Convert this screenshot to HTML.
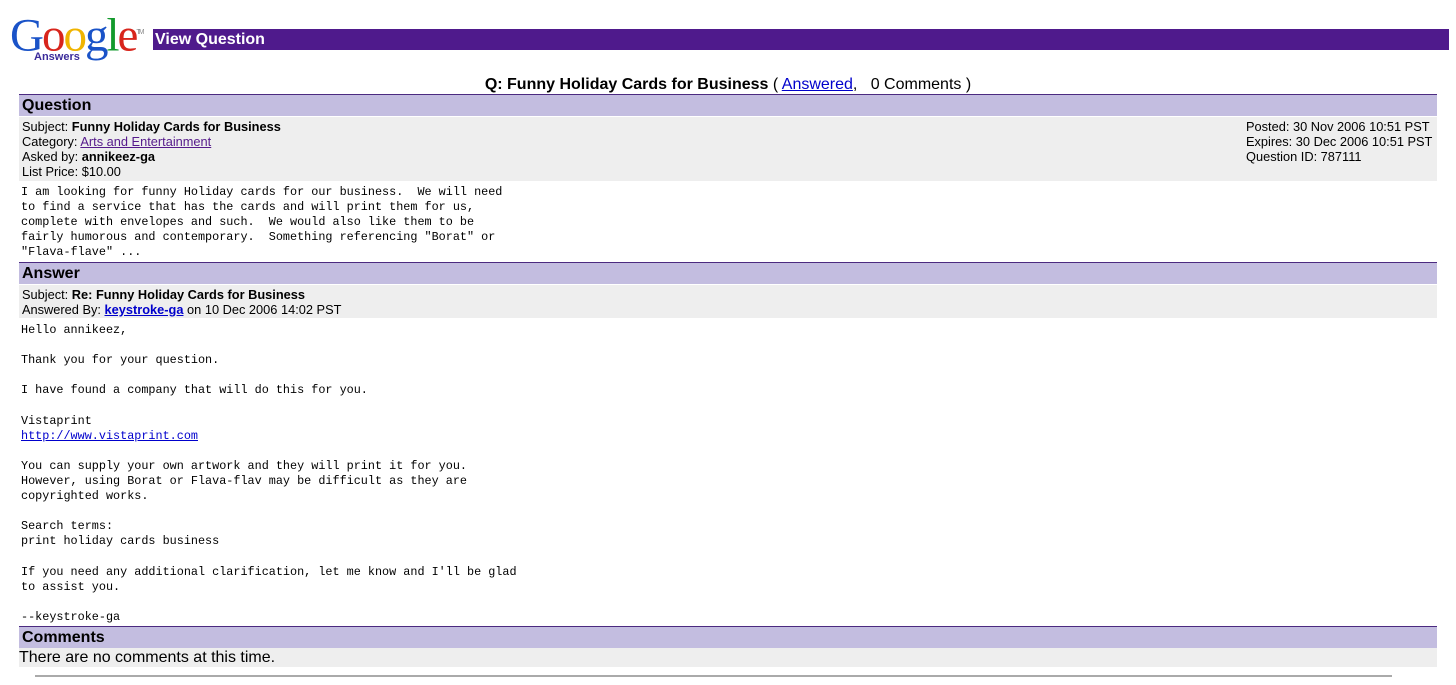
<!DOCTYPE html>
<html><head><meta charset="utf-8"><style>
*{margin:0;padding:0}
body{width:1456px;height:685px;background:#fff;position:relative;font-family:"Liberation Sans",Arial,sans-serif;color:#000;overflow:hidden}
.a{position:absolute}
.logo{left:10px;top:8px;font-family:"Liberation Serif",serif;font-size:47px;letter-spacing:-2px;line-height:50px}
.bar{left:153px;top:29px;width:1296px;height:21px;background:#4f1a8c;color:#fff;font-weight:bold;font-size:16px;line-height:21px;padding-left:2px;box-sizing:border-box}
.hdr{left:19px;width:1418px;height:22px;background:#c3bde0;border-top:1px solid #4b2a80;font-weight:bold;font-size:16px;line-height:22px;padding-left:3px;box-sizing:border-box}
.gray{left:19px;width:1418px;background:#eeeeee}
.info{font-size:12.8px;line-height:15px;padding-left:3px}
.mono{left:21px;font-family:"Liberation Mono",monospace;font-size:11.8px;line-height:15.1px;white-space:pre}
a{color:#0000cc}
</style></head><body>
<div class="a logo"><span style="color:#1a53c8">G</span><span style="color:#d8251c">o</span><span style="color:#f0b400">o</span><span style="color:#1a53c8">g</span><span style="color:#139a2c">l</span><span style="color:#d8251c">e</span><sup style="font-size:7px;color:#888;font-family:'Liberation Sans'">TM</sup></div>
<div class="a" style="left:34px;top:51px;font-size:11px;font-weight:bold;color:#3a2a9a">Answers</div>
<div class="a bar">View Question</div>
<div class="a" style="left:0;width:1456px;top:75px;text-align:center;font-size:16px;line-height:19px"><b>Q: Funny Holiday Cards for Business</b> ( <a href="#">Answered</a>, &nbsp; 0 Comments )</div>

<div class="a hdr" style="top:94px">Question</div>
<div class="a gray info" style="top:117px;height:64px;padding-top:2px;box-sizing:border-box">Subject: <b>Funny Holiday Cards for Business</b><br>Category: <a href="#" style="color:#551a8b">Arts and Entertainment</a><br>Asked by: <b>annikeez-ga</b><br>List Price: $10.00</div>
<div class="a info" style="left:1243px;top:119px">Posted: 30 Nov 2006 10:51 PST<br>Expires: 30 Dec 2006 10:51 PST<br>Question ID: 787111</div>
<div class="a mono" style="top:185px">I am looking for funny Holiday cards for our business.  We will need
to find a service that has the cards and will print them for us,
complete with envelopes and such.  We would also like them to be
fairly humorous and contemporary.  Something referencing "Borat" or
"Flava-flave" ...</div>

<div class="a hdr" style="top:262px">Answer</div>
<div class="a gray info" style="top:285px;height:33px;padding-top:2px;box-sizing:border-box">Subject: <b>Re: Funny Holiday Cards for Business</b><br>Answered By: <a href="#"><b>keystroke-ga</b></a> on 10 Dec 2006 14:02 PST</div>
<div class="a mono" style="top:323px">Hello annikeez,

Thank you for your question.

I have found a company that will do this for you.

Vistaprint
<a href="#">http://www.vistaprint.com</a>

You can supply your own artwork and they will print it for you.
However, using Borat or Flava-flav may be difficult as they are
copyrighted works.

Search terms:
print holiday cards business

If you need any additional clarification, let me know and I'll be glad
to assist you.

--keystroke-ga</div>

<div class="a hdr" style="top:626px">Comments</div>
<div class="a gray" style="top:648px;height:19px;font-size:16px;line-height:19px">There are no comments at this time.</div>
<div class="a" style="left:35px;top:675px;width:1357px;height:2px;background:#aaa"></div>
</body></html>
